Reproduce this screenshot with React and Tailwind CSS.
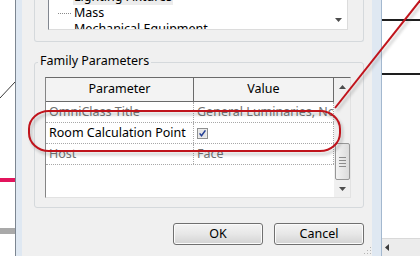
import React from "react";

const rows = [
  { name: "OmniClass Title", value: "General Luminaries, No", muted: true },
  { name: "Room Calculation Point", check: true },
  { name: "Host", value: "Face", muted: true },
];

function Checkbox() {
  return (
    <svg width="11" height="11" viewBox="0 0 11 11">
      <rect x="0.5" y="0.5" width="10" height="10" fill="#f2f2f2" stroke="#8e8f8f" />
      <rect x="1.5" y="1.5" width="8" height="8" fill="#e4e4e4" />
      <path d="M2.6 5.4 L4.5 7.8 L8.4 2.4" fill="none" stroke="#233f95" strokeWidth="1.5" />
    </svg>
  );
}

function Arrow({ dir }) {
  const d = {
    up: "M0 4 L3.5 0 L7 4 Z",
    down: "M0 0 L7 0 L3.5 4 Z",
  }[dir];
  return (
    <svg width="7" height="4" viewBox="0 0 7 4">
      <path d={d} fill="#4d4d4d" />
    </svg>
  );
}

function TreeItem({ label, selected }) {
  return (
    <div className="flex h-[16px] items-center">
      <div className="ml-[9px] w-[13px] border-t border-dotted border-[#8a8a8a]" />
      <span
        className={
          "ml-[2px] px-[1px] leading-[16px] whitespace-nowrap " +
          (selected ? "bg-[#ececec]" : "")
        }
      >
        {label}
      </span>
    </div>
  );
}

const App = () => {
  return (
    <div className="flex w-[420px] h-[256px] overflow-hidden bg-white relative font-['Noto_Sans',sans-serif] text-[12.5px] text-black">
      {/* drawing canvas, left */}
      <div className="w-[15px] shrink-0">
        <svg width="15" height="256" viewBox="0 0 15 256">
          <line x1="0" y1="98" x2="15" y2="82" stroke="#3a3a3a" strokeWidth="1" />
          <rect x="0" y="178" width="15" height="4" fill="#e2145c" />
          <rect x="0" y="228" width="15" height="6" fill="#a9a9a9" />
        </svg>
      </div>

      {/* dialog window */}
      <div className="w-[367px] shrink-0 flex border-l border-r border-l-[#7c8691] border-r-[#a3b8cf] bg-[#dfe8f2] pl-[6px] pr-[9px]">
        <div className="w-[350px] bg-[#f0f0f0] flex flex-col">
          {/* category tree group */}
          <div className="pl-[12px]">
            <div className="w-[330px] h-[42px] border-x border-b border-[#d5d9dc] rounded-b-[3px] pl-[13px]">
              <div className="w-[300px] h-[30px] flex bg-white border-l border-l-[#828790] border-r border-b border-[#dcdcdc] overflow-hidden">
                <div className="flex-1 -mt-[11px]">
                  <TreeItem label="Lighting Fixtures" selected />
                  <TreeItem label="Mass" />
                  <TreeItem label="Mechanical Equipment" />
                </div>
                <div className="w-[17px] flex flex-col justify-end items-center pb-[7px]">
                  <Arrow dir="down" />
                </div>
              </div>
            </div>
          </div>

          {/* family parameters group */}
          <div className="pl-[12px] mt-[11px]">
            <div className="relative z-10 ml-[4px] w-fit px-[2px] leading-[16px] bg-[#f0f0f0]">
              Family Parameters
            </div>
            <div className="-mt-[7px] w-[330px] border border-[#d5d9dc] rounded-[3px] pt-[14px] pb-[9px] pl-[10px]">
              <div className="w-[306px] h-[121px] flex bg-white border-l border-t border-l-[#858585] border-t-[#6a6a6a] border-r border-b border-r-[#e2e2e2] border-b-[#e2e2e2]">
                <div className="w-[288px] flex flex-col">
                  <div className="flex h-[24px] border-b border-[#6a6a6a] bg-[#f3f3f3]">
                    <div className="w-[148px] border-r border-[#6a6a6a] flex items-center justify-center">
                      Parameter
                    </div>
                    <div className="flex-1 border-r border-[#6a6a6a] flex items-center justify-center">
                      Value
                    </div>
                  </div>
                  {rows.map((row) => (
                    <div
                      key={row.name}
                      className={
                        "flex h-[21px] border-b border-dotted border-[#a8a8a8] " +
                        (row.muted ? "text-[#707070]" : "")
                      }
                    >
                      <div className="w-[148px] border-r border-dotted border-[#a8a8a8] pl-[3px] flex items-center whitespace-nowrap overflow-hidden">
                        {row.name}
                      </div>
                      <div className="flex-1 border-r border-dotted border-[#a8a8a8] pl-[3px] flex items-center whitespace-nowrap overflow-hidden">
                        {row.check ? <Checkbox /> : row.value}
                      </div>
                    </div>
                  ))}
                </div>
                {/* vertical scrollbar */}
                <div className="w-[17px] flex flex-col bg-[#f0f0f0]">
                  <div className="h-[17px] flex items-center justify-center">
                    <Arrow dir="up" />
                  </div>
                  <div className="flex-1 flex flex-col justify-end items-center">
                    <div className="w-[15px] h-[37px] rounded-[2px] border border-[#979797] bg-linear-to-r from-[#f3f3f3] to-[#dcdcdc] flex flex-col items-center justify-center gap-[2px]">
                      <div className="w-[7px] h-[1px] bg-[#8c8c8c]" />
                      <div className="w-[7px] h-[1px] bg-[#8c8c8c]" />
                      <div className="w-[7px] h-[1px] bg-[#8c8c8c]" />
                      <div className="w-[7px] h-[1px] bg-[#8c8c8c]" />
                    </div>
                  </div>
                  <div className="h-[17px] flex items-center justify-center">
                    <Arrow dir="down" />
                  </div>
                </div>
              </div>
            </div>
          </div>

          {/* buttons */}
          <div className="pl-[12px] mt-[15px]">
            <div className="w-[330px] flex justify-end gap-[11px]">
              <button className="w-[90px] h-[22px] rounded-[3px] border border-[#707070] bg-linear-to-b from-[#f4f4f4] via-[#e7e7e7] to-[#d3d3d3] shadow-[inset_0_0_0_1px_#fbfbfb] leading-none">
                OK
              </button>
              <button className="w-[90px] h-[22px] rounded-[3px] border border-[#707070] bg-linear-to-b from-[#f4f4f4] via-[#e7e7e7] to-[#d3d3d3] shadow-[inset_0_0_0_1px_#fbfbfb] leading-none">
                Cancel
              </button>
            </div>
          </div>
          <div className="flex justify-end mt-auto">
            <svg width="9" height="9" viewBox="0 0 9 9" className="mb-[1px]">
              <rect x="7" y="1" width="1" height="1" fill="#b5b5b5" />
              <rect x="4" y="4" width="1" height="1" fill="#b5b5b5" />
              <rect x="7" y="4" width="1" height="1" fill="#b5b5b5" />
              <rect x="1" y="7" width="1" height="1" fill="#b5b5b5" />
              <rect x="4" y="7" width="1" height="1" fill="#b5b5b5" />
              <rect x="7" y="7" width="1" height="1" fill="#b5b5b5" />
            </svg>
          </div>
        </div>
      </div>

      {/* drawing canvas, right */}
      <div className="flex-1 flex flex-col">
        <div className="h-[19px]" />
        <div className="h-[2px] bg-[#1e1e1e]" />
        <div className="h-[52px]" />
        <div className="h-[2px] bg-[#1e1e1e]" />
        <div className="flex-1" />
        <div className="h-[18px] border-t border-[#d9d9d9] bg-[#ececec] flex items-center pl-[3px]">
          <svg width="4" height="7" viewBox="0 0 4 7">
            <path d="M4 0 L0 3.5 L4 7 Z" fill="#3a3a3a" />
          </svg>
        </div>
      </div>

      {/* red callout annotation */}
      <svg
        className="absolute inset-0 pointer-events-none"
        width="420"
        height="256"
        viewBox="0 0 420 256"
      >
        <defs>
          <filter id="shadow" x="-10%" y="-10%" width="120%" height="130%">
            <feGaussianBlur stdDeviation="1.5" />
          </filter>
        </defs>
        <g opacity="0.35" filter="url(#shadow)" transform="translate(2 3)">
          <rect x="29" y="111" width="311" height="40" rx="20" ry="18" fill="none" stroke="#555" strokeWidth="2" />
          <line x1="335" y1="108" x2="422" y2="-2" stroke="#555" strokeWidth="2" />
        </g>
        <rect x="29" y="111" width="311" height="40" rx="20" ry="18" fill="none" stroke="#c0141c" strokeWidth="2" />
        <line x1="335" y1="108" x2="422" y2="-2" stroke="#c0141c" strokeWidth="2" />
      </svg>
    </div>
  );
};

export default App;
